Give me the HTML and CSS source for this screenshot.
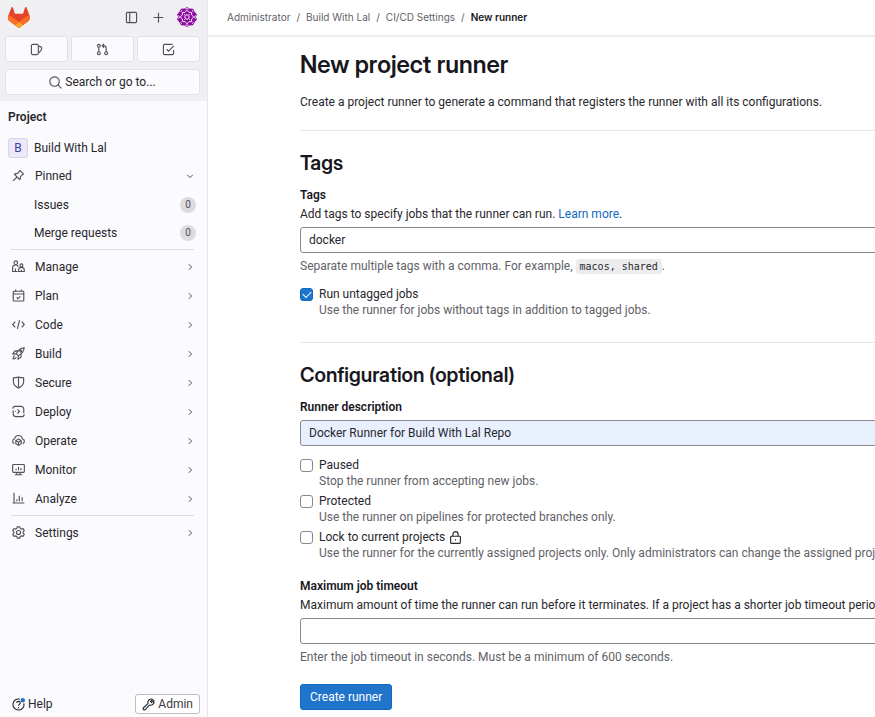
FILE: index.html
```html
<!DOCTYPE html>
<html lang="en">
<head>
    <meta charset="UTF-8">
    <meta name="viewport" content="width=device-width, initial-scale=1.0">
    <title>New runner</title>
    <link rel="stylesheet" href="styles.css">
</head>
<body>
    <svg class="sprite" aria-hidden="true">
        <symbol id="chevron" viewBox="0 0 16 16"><path d="M6 3.5 10.5 8 6 12.5"/></symbol>
        <symbol id="chevron-down" viewBox="0 0 16 16"><path d="M3.5 6 8 10.5 12.5 6"/></symbol>
    </svg>
    <aside class="sidebar">
        <div class="sidebar-top">
            <div class="brand-row">
                <a href="#" class="logo" aria-label="Homepage">
                    <svg width="22" height="21" viewBox="0 0 25 24">
                        <path fill="#e24329" d="m24.507 9.5-.034-.09L21.082.562a.896.896 0 0 0-1.694.091l-2.29 7.01H7.825L5.535.653a.898.898 0 0 0-1.694-.09L.451 9.411.416 9.5a6.297 6.297 0 0 0 2.09 7.278l.012.01.03.022 5.16 3.867 2.56 1.935 1.554 1.176a1.051 1.051 0 0 0 1.268 0l1.555-1.176 2.56-1.935 5.197-3.89.014-.01A6.297 6.297 0 0 0 24.507 9.5Z"/>
                        <path fill="#fc6d26" d="m24.507 9.5-.034-.09a11.44 11.44 0 0 0-4.56 2.051l-7.447 5.632 4.742 3.584 5.197-3.89.014-.01A6.297 6.297 0 0 0 24.507 9.5Z"/>
                        <path fill="#fca326" d="m7.707 20.677 2.56 1.935 1.555 1.176a1.051 1.051 0 0 0 1.268 0l1.555-1.176 2.56-1.935-4.743-3.584-4.755 3.584Z"/>
                        <path fill="#fc6d26" d="M5.01 11.461a11.43 11.43 0 0 0-4.56-2.05L.416 9.5a6.297 6.297 0 0 0 2.09 7.278l.012.01.03.022 5.16 3.867 4.745-3.584-7.444-5.632Z"/>
                    </svg>
                </a>
                <button class="plain" aria-label="Hide sidebar">
                    <svg class="icon" viewBox="0 0 16 16"><rect x="1.75" y="1.75" width="12.5" height="12.5" rx="1.2"/><path d="M5.8 2v12"/></svg>
                </button>
                <button class="plain" aria-label="Create new">
                    <svg class="icon" viewBox="0 0 16 16"><path d="M8 2v12M2 8h12"/></svg>
                </button>
                <button class="plain avatar" aria-label="User menu">
                    <svg width="20" height="20" viewBox="0 0 20 20">
                        <path fill="#8e0fa3" d="M10 0 12.5 1.6 16 1.8 17.8 5 20 7.5 18.8 10 20 12.5 17.8 15 16 18.2 12.5 18.4 10 20 7.5 18.4 4 18.2 2.2 15 0 12.5 1.2 10 0 7.5 2.2 5 4 1.8 7.5 1.6Z"/>
                        <g fill="none" stroke="#f6e6fa">
                            <path d="M10 3.2 12 5.4H14.6V8L16.8 10 14.6 12V14.6H12L10 16.8 8 14.6H5.4V12L3.2 10 5.4 8V5.4H8Z"/>
                            <circle cx="10" cy="10" r="2.2"/>
                            <path d="M3.5 4.5 5 3.5M16.5 4.5 15 3.5M3.5 15.5 5 16.5M16.5 15.5 15 16.5M1.5 8.5 2.5 10 1.5 11.5M18.5 8.5 17.5 10 18.5 11.5M8.5 1.8h3M8.5 18.2h3"/>
                            <path d="M7.2 7.2l1 1M12.8 7.2l-1 1M7.2 12.8l1-1M12.8 12.8l-1-1"/>
                        </g>
                    </svg>
                </button>
            </div>
            <div class="counter-row">
                <button class="tile" aria-label="Assigned issues">
                    <svg class="icon" viewBox="0 0 16 16"><rect x="1.75" y="1.75" width="8.5" height="12.5" rx="1.5"/><path d="M10.5 3.8l3 1a1.3 1.3 0 0 1 .9 1.5l-.7 2.7-3.2 3.5"/></svg>
                </button>
                <button class="tile" aria-label="Merge requests">
                    <svg class="icon" viewBox="0 0 16 16"><circle cx="3.5" cy="3.5" r="1.75"/><circle cx="3.5" cy="12.5" r="1.75"/><circle cx="12.5" cy="12.5" r="1.75"/><path d="M3.5 5.3v5.4M12.5 10.7V6c0-1.5-.8-2.5-2.5-2.5H8M10 1 7.6 3.5 10 6"/></svg>
                </button>
                <button class="tile" aria-label="To-Do List">
                    <svg class="icon" viewBox="0 0 16 16"><path d="M14.25 8.5V13A1.25 1.25 0 0 1 13 14.25H3A1.25 1.25 0 0 1 1.75 13V3A1.25 1.25 0 0 1 3 1.75h10M5.5 7.5 8 10l6.5-6.5"/></svg>
                </button>
            </div>
            <button class="tile search">
                <svg class="icon" viewBox="0 0 16 16"><circle cx="6.8" cy="6.8" r="5.8"/><path d="m11 11 4.2 4.2"/></svg>
                Search or go to...
            </button>
        </div>

        <nav class="menu" aria-label="Project">
            <h2 class="menu-title">Project</h2>
            <a href="#" class="item project"><span class="letter">B</span>Build With Lal</a>
            <a href="#" class="item pinned">
                <svg class="icon" viewBox="0 0 16 16"><path d="M9.8 1.8 14.2 6.2 12.6 7.2 10.5 9.3 10.3 12 9.3 12.9 3.1 6.7 4 5.7 6.7 5.5 8.8 3.4ZM6 10l-4.7 4.7"/></svg>
                Pinned
                <svg class="chevron" viewBox="0 0 16 16"><use href="#chevron-down"/></svg>
            </a>
            <a href="#" class="item sub">Issues<span class="count">0</span></a>
            <a href="#" class="item sub">Merge requests<span class="count">0</span></a>
            <hr>
            <a href="#" class="item">
                <svg class="icon" viewBox="0 0 16 16"><circle cx="4.7" cy="3.3" r="2.2"/><path d="M7 14.2H.8V9.5c0-2 1.4-3.3 3.6-3.3 1.7 0 2.9.8 3.3 2.2M4.3 10.500v3.5"/><circle cx="11.6" cy="6.5" r="1.8"/><path d="M8.2 14.2v-2.3c0-1.7 1.4-2.9 3.4-2.9s3.5 1.2 3.5 2.9v2.3ZM11.6 12v2"/></svg>
                Manage<svg class="chevron" viewBox="0 0 16 16"><use href="#chevron"/></svg>
            </a>
            <a href="#" class="item">
                <svg class="icon" viewBox="0 0 16 16"><rect x="1.5" y="2.8" width="13" height="12" rx="1"/><path d="M1.5 6.2h13M4.5.5v2.5M11.5.5v2.5M5.7 10.5l1.6 1.5 3-3"/></svg>
                Plan<svg class="chevron" viewBox="0 0 16 16"><use href="#chevron"/></svg>
            </a>
            <a href="#" class="item">
                <svg class="icon" viewBox="0 0 16 16"><path d="M4 4.5.9 8 4 11.5M12 4.5 15.1 8 12 11.5M9.3 2.5 6.7 13.5"/></svg>
                Code<svg class="chevron" viewBox="0 0 16 16"><use href="#chevron"/></svg>
            </a>
            <a href="#" class="item">
                <svg class="icon" viewBox="0 0 16 16"><path d="M5.3 8.2C7 4.5 10 1.5 15 1c-.5 5-3.5 8-7.2 9.7ZM5.3 8.2 1 8.5 3.5 5l3.5-.3M7.8 10.7 7.5 15 11 12.5l.3-3.5M3.5 10.5c-1.5.7-2.2 2.5-2.2 4.2 1.7 0 3.5-.7 4.2-2.2"/><circle cx="10.7" cy="5.3" r="1.1"/></svg>
                Build<svg class="chevron" viewBox="0 0 16 16"><use href="#chevron"/></svg>
            </a>
            <a href="#" class="item">
                <svg class="icon" viewBox="0 0 16 16"><path d="M8 1.3C6 2 4 2.3 1.7 2.3V7c0 3.5 2.5 6 6.3 7.8 3.8-1.8 6.3-4.3 6.3-7.8V2.3C12 2.3 10 2 8 1.3ZM8 1.3v13.5"/></svg>
                Secure<svg class="chevron" viewBox="0 0 16 16"><use href="#chevron"/></svg>
            </a>
            <a href="#" class="item">
                <svg class="icon" viewBox="0 0 16 16"><path d="M1 4.5C1 2.8 2 1.7 3.7 1.7H11a3.5 3.5 0 0 1 3.5 3.5V10M1.5 6.5V11A3.5 3.5 0 0 0 5 14.3h7.3c1.7 0 2.7-1.1 2.7-2.8M6.7 5.5 9.2 8l-2.5 2.5M4 8h1"/></svg>
                Deploy<svg class="chevron" viewBox="0 0 16 16"><use href="#chevron"/></svg>
            </a>
            <a href="#" class="item">
                <svg class="icon" viewBox="0 0 16 16"><path d="M2.7 12C1.5 11.3.8 10.3.8 9c0-1.7 1-2.9 2.5-3.2C3.7 3.3 5.5 1.8 8 1.8s4.3 1.5 4.7 4C14.2 6.1 15.2 7.3 15.2 9c0 1.3-.7 2.3-1.9 3M8 6.2l3.3 1.8v4L8 14 4.7 12V8ZM4.7 8 8 10l3.3-2M8 10v4"/></svg>
                Operate<svg class="chevron" viewBox="0 0 16 16"><use href="#chevron"/></svg>
            </a>
            <a href="#" class="item">
                <svg class="icon" viewBox="0 0 16 16"><rect x=".8" y="1.8" width="14.4" height="9.7" rx="1"/><path d="M5 7v2M8 4.5V9M11 6v3M6 11.5v3M10 11.5v3M3.5 14.5h9"/></svg>
                Monitor<svg class="chevron" viewBox="0 0 16 16"><use href="#chevron"/></svg>
            </a>
            <a href="#" class="item">
                <svg class="icon" viewBox="0 0 16 16"><path d="M2.5 1v12.5M.8 13.5h14.4M6 9v2.5M9 4.5v7M12.5 6.5v5"/></svg>
                Analyze<svg class="chevron" viewBox="0 0 16 16"><use href="#chevron"/></svg>
            </a>
            <hr>
            <a href="#" class="item">
                <svg class="icon" viewBox="0 0 16 16"><path d="M6.5 1h3l.6 2 1.5.8 2-.5 1.5 2.5L13.7 7.3v1.4l1.4 1.5-1.5 2.5-2-.5-1.5.8-.6 2h-3l-.6-2-1.5-.8-2 .5L.9 10.2l1.4-1.5V7.3L.9 5.8l1.5-2.5 2 .5L5.9 3Z"/><circle cx="8" cy="8" r="2.5"/></svg>
                Settings<svg class="chevron" viewBox="0 0 16 16"><use href="#chevron"/></svg>
            </a>
        </nav>

        <div class="sidebar-footer">
            <button class="plain help">
                <svg class="icon" viewBox="0 0 16 16"><path d="M9.5 1.4A6.8 6.8 0 1 0 14.6 6.5M5.8 6.3c0-1.3 1-2.1 2.2-2.1s2.2.8 2.2 2c0 1.5-2.2 1.6-2.2 3.2M8 11v1.5"/><circle class="dot" cx="13.3" cy="2.7" r="2.7"/></svg>
                Help
            </button>
            <a href="#" class="admin">
                <svg class="icon" viewBox="0 0 16 16"><path d="M13 1.6a4.3 4.3 0 0 0-5.7 5.3L1.8 12a1.5 1.5 0 0 0 2.2 2.2l5.1-5.5A4.3 4.3 0 0 0 14.4 3L11.7 5.5 10.5 4.3Z"/></svg>
                Admin
            </a>
        </div>
    </aside>

    <div class="page">
        <nav class="breadcrumbs" aria-label="Breadcrumbs">
            <a href="#">Administrator</a><span>/</span>
            <a href="#">Build With Lal</a><span>/</span>
            <a href="#">CI/CD Settings</a><span>/</span>
            <a href="#" class="current">New runner</a>
        </nav>
        <main>
            <h1>New project runner</h1>
            <p class="intro">Create a project runner to generate a command that registers the runner with all its configurations.</p>
            <form>
                <section>
                    <h2>Tags</h2>
                    <label class="title" for="tags">Tags</label>
                    <p>Add tags to specify jobs that the runner can run. <a href="#">Learn more</a>.</p>
                    <input type="text" id="tags" class="field" value="docker">
                    <p class="muted">Separate multiple tags with a comma. For example, <code>macos, shared</code>.</p>
                    <div class="check first">
                        <input type="checkbox" id="untagged" checked>
                        <label for="untagged">Run untagged jobs</label>
                        <p class="muted">Use the runner for jobs without tags in addition to tagged jobs.</p>
                    </div>
                </section>
                <section class="config">
                    <h2>Configuration (optional)</h2>
                    <label class="title" for="description">Runner description</label>
                    <input type="text" id="description" class="field filled" value="Docker Runner for Build With Lal Repo">
                    <div class="check first">
                        <input type="checkbox" id="paused">
                        <label for="paused">Paused</label>
                        <p class="muted">Stop the runner from accepting new jobs.</p>
                    </div>
                    <div class="check">
                        <input type="checkbox" id="protected">
                        <label for="protected">Protected</label>
                        <p class="muted">Use the runner on pipelines for protected branches only.</p>
                    </div>
                    <div class="check">
                        <input type="checkbox" id="lock">
                        <label for="lock">Lock to current projects
                            <svg class="icon" viewBox="0 0 16 16"><rect x="2" y="6.5" width="12" height="8.7" rx="1"/><path d="M4.8 6.5V4a3.2 3.2 0 0 1 6.4 0v2.5M8 10v1.7"/></svg>
                        </label>
                        <p class="muted">Use the runner for the currently assigned projects only. Only administrators can change the assigned projects.</p>
                    </div>
                    <label class="title timeout" for="timeout">Maximum job timeout</label>
                    <p>Maximum amount of time the runner can run before it terminates. If a project has a shorter job timeout period, the shorter period applies.</p>
                    <input type="text" id="timeout" class="field">
                    <p class="muted">Enter the job timeout in seconds. Must be a minimum of 600 seconds.</p>
                </section>
                <button type="submit" class="create">Create runner</button>
            </form>
        </main>
    </div>
</body>
</html>
```
FILE: styles.css
```css
* {
    box-sizing: border-box;
}
body {
    margin: 0;
    display: flex;
    min-height: 100vh;
    font-family: Roboto, "Noto Sans", sans-serif;
    font-size: 12px;
    line-height: 16px;
    color: #28272d;
    background: #fff;
    overflow-x: hidden;
}
button, input {
    font: inherit;
    color: inherit;
}
button {
    cursor: pointer;
}
h1, h2, p {
    margin: 0;
}
a {
    color: #1068bf;
    text-decoration: none;
}
.sprite {
    display: none;
}
.icon {
    width: 13px;
    height: 13px;
    flex: none;
    overflow: visible;
}
.icon, .chevron {
    fill: none;
    stroke: #535158;
    stroke-width: 1.4;
}

/* Sidebar */
.sidebar {
    width: 208px;
    flex: none;
    display: flex;
    flex-direction: column;
    background: #fbfafd;
    border-right: 1px solid #e7e6eb;
}
.sidebar-top {
    padding: 6px 7px 6px 5px;
    background: #f0f0f2;
}
.brand-row, .counter-row {
    display: flex;
    align-items: center;
    gap: 3px;
}
.brand-row {
    height: 22px;
    margin-bottom: 8px;
    gap: 14px;
    padding: 0 3px;
}
.logo {
    display: flex;
    margin-right: auto;
}
.plain {
    display: flex;
    align-items: center;
    padding: 0;
    border: 0;
    background: none;
}
.avatar {
    margin-left: -2px;
}
.tile {
    flex: 1;
    display: flex;
    justify-content: center;
    align-items: center;
    height: 26px;
    padding: 0;
    background: #fbfafd;
    border: 1px solid #e2e1e6;
    border-radius: 3px;
}
.search {
    width: 100%;
    margin-top: 7px;
    gap: 3px;
}
.menu {
    flex: 1;
    padding: 6px 7px 0 5px;
}
.menu-title {
    padding: 2px 3px;
    margin-bottom: 7px;
    font-size: 12px;
    line-height: 16px;
    font-weight: 600;
}
.item {
    display: flex;
    align-items: center;
    gap: 10px;
    height: 29px;
    padding: 0 5px 0 7px;
    color: #28272d;
}
.chevron {
    width: 10px;
    height: 10px;
    margin-left: auto;
    stroke-width: 1.6;
}
.project {
    height: 28px;
    padding-left: 3px;
    gap: 6px;
}
.pinned {
    height: 27px;
    margin-bottom: 2px;
}
.letter {
    width: 20px;
    height: 20px;
    border: 1px solid #d9d2ee;
    border-radius: 3px;
    background: #ece8f8;
    color: #41419f;
    line-height: 18px;
    text-align: center;
}
.sub {
    height: 28px;
    padding: 0 4px 0 29px;
}
.count {
    width: 16px;
    height: 16px;
    margin-left: auto;
    border-radius: 8px;
    background: #dcdcde;
    color: #535158;
    font-size: 10px;
    text-align: center;
}
.menu hr {
    height: 1px;
    margin: 2px 6px;
    border: 0;
    background: #dcdce0;
}
.sidebar-footer {
    display: flex;
    justify-content: space-between;
    align-items: center;
    padding: 0 7px 3px 12px;
}
.help {
    gap: 3px;
}
.help .icon, .admin .icon, .check .icon {
    stroke: #28272d;
}
.help .dot {
    fill: #1f75cb;
    stroke: none;
}
.admin {
    display: flex;
    align-items: center;
    gap: 3px;
    height: 20px;
    padding: 0 6px;
    color: #3a383f;
    background: #fff;
    border: 1px solid #bfbfc3;
    border-radius: 3px;
}

/* Page */
.page {
    flex: 1;
    min-width: 0;
    overflow: hidden;
}
.breadcrumbs {
    display: flex;
    align-items: center;
    gap: 6px;
    height: 37px;
    padding: 0 19px 2px;
    border-bottom: 2px solid #ececef;
    font-family: Inter, "Noto Sans", sans-serif;
    font-size: 10px;
    white-space: nowrap;
}
.breadcrumbs a, .breadcrumbs span {
    color: #626168;
}
.breadcrumbs .current {
    color: #18171d;
    font-weight: 600;
}
main {
    min-width: 780px;
    padding: 12px 16px 0 92px;
    white-space: nowrap;
}
h1, main h2 {
    color: #18171d;
    font-family: "Inter Display", Inter, sans-serif;
    font-weight: 600;
}
h1 {
    font-size: 24px;
    line-height: 32px;
}
main h2 {
    font-size: 20px;
    line-height: 24px;
    margin-bottom: 12px;
}
.intro {
    margin: 13px 0 20px;
}
section {
    padding-top: 20px;
    border-top: 1px solid #e7e6eb;
}
.config {
    margin-top: 24px;
}
.title {
    display: block;
    margin-bottom: 3px;
    color: #18171d;
    font-weight: 600;
}
.timeout {
    margin-top: 17px;
}
.field {
    display: block;
    width: 100%;
    height: 26px;
    margin: 5px 0;
    padding: 0 8px;
    background: #fff;
    border: 1px solid #89888d;
    border-radius: 3px;
}
.filled {
    background: #e8f0fe;
}
.muted {
    color: #626168;
}
code {
    padding: 2px 4px;
    background: #ececef;
    border-radius: 3px;
    color: #28272d;
    font-family: "DejaVu Sans Mono", monospace;
    font-size: 10px;
}
.check {
    display: grid;
    grid-template-columns: 13px 1fr;
    column-gap: 6px;
    margin-top: 4px;
    align-items: center;
}
.check.first {
    margin-top: 11px;
}
.check label {
    display: flex;
    align-items: center;
    gap: 4px;
}
.check .muted {
    grid-column: 2;
}
.check input {
    display: grid;
    place-content: center;
    appearance: none;
    width: 13px;
    height: 13px;
    margin: 0;
    background: #fff;
    border: 1px solid #89888d;
    border-radius: 3px;
}
.check input:checked {
    background: #1f75cb;
    border-color: #1068bf;
}
.check input:checked::after {
    content: "";
    width: 7px;
    height: 4px;
    margin-bottom: 2px;
    border: solid #fff;
    border-width: 0 0 1px 1px;
    transform: rotate(-45deg);
}
.create {
    display: block;
    height: 26px;
    margin: 19px 0 6px;
    padding: 0 9px;
    color: #fff;
    background: #1f75cb;
    border: 1px solid #1068bf;
    border-radius: 3px;
}
```
